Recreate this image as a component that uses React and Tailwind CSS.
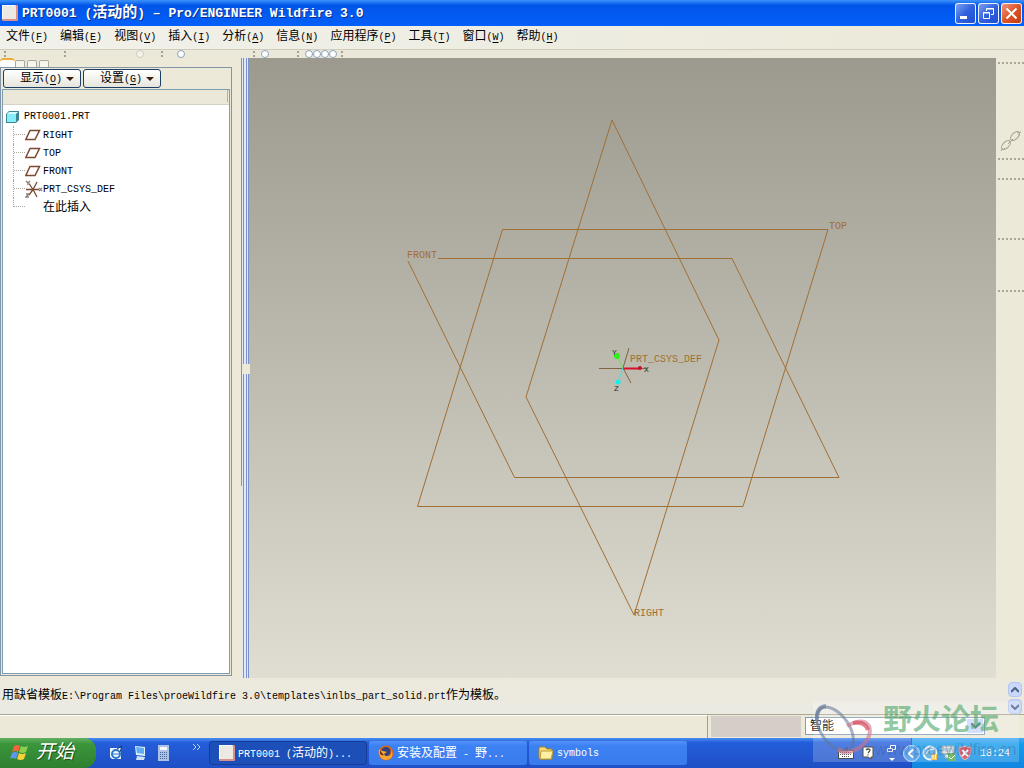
import React from 'react';

// CJK runs are drawn larger than the latin ones, two latin cells per glyph
const Mixed = ({ text, cjk = 'text-[12px]' }) => (
  <>
    {text.split(/([\u3000-\u9fff]+)/).filter(Boolean).map((part, i) => (
      <span key={i} className={/[\u3000-\u9fff]/.test(part) ? cjk : ''}>{part}</span>
    ))}
  </>
);

const Hot = ({ label, letter }) => (
  <span>
    <span className="text-[12px]">{label}</span>(<u className="underline-offset-2">{letter}</u>)
  </span>
);

const menus = [
  ['文件', 'F'], ['编辑', 'E'], ['视图', 'V'], ['插入', 'I'], ['分析', 'A'],
  ['信息', 'N'], ['应用程序', 'P'], ['工具', 'T'], ['窗口', 'W'], ['帮助', 'H'],
];

const PartIcon = ({ size = 16 }) => (
  <svg width={size} height={size} viewBox="0 0 16 16">
    <rect width="16" height="16" rx="1" fill="#d98f8a" />
    <path d="M0 0h14L13 1 1 14H0z" fill="#f8fbff" />
    <rect x="1" y="1" width="13" height="13" fill="#ece9e2" />
  </svg>
);

const WindowButton = ({ label, red, children }) => (
  <button
    aria-label={label}
    className={`w-[21px] h-[21px] rounded-[3px] border border-white/90 flex items-center justify-center bg-linear-to-br ${
      red ? 'from-[#ee9577] via-[#dc5428] to-[#c53b10]' : 'from-[#7c9ff3] via-[#3161dd] to-[#1f4fd3]'
    }`}
  >
    <svg width="19" height="19" viewBox="0 0 19 19" fill="none" stroke="#fff">{children}</svg>
  </button>
);

const TitleBar = () => (
  <header className="h-[26px] shrink-0 flex items-center pl-[2px] pr-[2px] bg-linear-to-b from-[#3c93fb] via-[#0155e8] via-20% to-[#0460fb]">
    <PartIcon />
    <h1 className="ml-1 pt-px flex-1 text-[13px] leading-[24px] font-bold text-white whitespace-pre [text-shadow:1px_1px_#0a2f8c]">
      <Mixed text="PRT0001 (活动的) – Pro/ENGINEER Wildfire 3.0" cjk="text-[15px]" />
    </h1>
    <div className="flex gap-[2px]">
      <WindowButton label="最小化"><path d="M4 13.5h7" strokeWidth="3" /></WindowButton>
      <WindowButton label="还原">
        <path d="M7.5 7V4.500h7v6H12M7 5h8" />
        <path d="M4.500 8.500h6v6h-6zM4 9h7" />
      </WindowButton>
      <WindowButton label="关闭" red><path d="M4.500 4.500l10 10M14.500 4.500l-10 10" strokeWidth="2" /></WindowButton>
    </div>
  </header>
);

const MenuBar = () => (
  <nav className="h-6 shrink-0 flex items-center gap-3 pl-[6px] bg-linear-to-r from-[#f1f1eb] via-[#eeede2] to-[#ece9d8] border-b border-[#d0cdbd]">
    {menus.map(([label, letter]) => (
      <button key={letter} className="leading-4 whitespace-nowrap"><Hot label={label} letter={letter} /></button>
    ))}
  </nav>
);

const Grip = () => (
  <span className="flex flex-col gap-[2px]">
    <i className="block w-[2px] h-[2px] bg-[#a5a293]" />
    <i className="block w-[2px] h-[2px] bg-[#a5a293]" />
  </span>
);

const Knob = ({ faint }) => (
  <span className={`block w-2 h-2 rounded-full border ${faint ? 'border-[#d0cdc0] bg-[#f4f2ea]' : 'border-[#8fa3bb] bg-white'}`} />
);

const ToolStrip = () => (
  <div className="h-2 shrink-0 flex items-center pl-1 bg-[#ebe8d9]">
    <div className="w-[60px]"><Grip /></div>
    <div className="w-[72px]"><Grip /></div>
    <div className="w-[25px]"><Knob faint /></div>
    <div className="w-4"><Grip /></div>
    <div className="w-[76px]"><Knob /></div>
    <div className="w-2"><Grip /></div>
    <div className="w-9"><Knob /></div>
    <div className="w-2"><Grip /></div>
    <div className="w-9 flex"><Knob /><Knob /><Knob /><Knob /></div>
    <Grip />
  </div>
);

const PlaneIcon = () => (
  <svg width="16" height="12" viewBox="0 0 16 12" fill="none" stroke="#7b4a30" strokeWidth="1.5">
    <path d="M5 1.500h9.500l-4.500 9H0.800z" />
  </svg>
);

const CsysIcon = () => (
  <svg width="18" height="18" viewBox="0 0 18 18" className="shrink-0" fill="none" stroke="#7b4a30" strokeWidth="1.300">
    <path d="M1 9.500h13M8 9.500L12 2M8 9.500L4 3.500M8 9.500L4 15M8 9.500L12 17" />
    <path d="M1 1l2 2 2-2M3 3v2M14 8l3 3M17 8l-3 3M1 14h3l-3 3h3" stroke="#8b8078" />
  </svg>
);

const CubeIcon = () => (
  <svg width="14" height="14" viewBox="0 0 14 14">
    <path d="M0 4l3-3h10v9l-3 3H0z" fill="#3e8792" />
    <path d="M1 4l2-2h9l-2 2z" fill="#d8fbff" />
    <rect x="1" y="4" width="9" height="8" fill="#86eef8" />
  </svg>
);

const tree = [
  ['RIGHT', <PlaneIcon />],
  ['TOP', <PlaneIcon />],
  ['FRONT', <PlaneIcon />],
  ['PRT_CSYS_DEF', <CsysIcon />],
  ['在此插入', null],
];

const DropButton = ({ label, letter }) => (
  <button className="h-[19px] w-[78px] shrink-0 flex items-center justify-end gap-1 pr-[6px] pt-px rounded-[3px] border border-[#1d3f66] bg-linear-to-b from-white to-[#e6e5dc] leading-4">
    <Hot label={label} letter={letter} />
    <svg width="8" height="4" viewBox="0 0 8 4"><path d="M0 0h8L4 4z" fill="#3a1d12" /></svg>
  </button>
);

const ModelTree = () => (
  <aside className="w-[232px] shrink-0 flex flex-col pb-[2px]">
    <div className="h-[9px] flex items-end">
      <button aria-label="模型树" className="w-[15px] h-[9px] bg-white border-t-2 border-[#eda93a] rounded-t-sm" />
      {['文件夹', '收藏夹', '连接'].map((t) => (
        <button key={t} aria-label={t} className="w-[10px] h-[7px] mr-[2px] bg-[#f6f5ee] border border-b-0 border-[#a7a99f] rounded-t-[2px]" />
      ))}
    </div>
    <div className="flex-1 flex flex-col border border-[#8195a5] pl-px pr-px pb-px">
      <div className="flex gap-[2px] pl-px pt-px pb-px">
        <DropButton label="显示" letter="O" />
        <DropButton label="设置" letter="G" />
      </div>
      <div className="flex-1 border border-[#7f9db0] bg-white">
        <div className="h-[15px] bg-[#ebe8d9] border-b border-[#d5d2c2] pr-px flex justify-end">
          <span className="w-px h-3 bg-[#a9b3b8]" />
        </div>
        <div className="pt-[3px] pl-[3px] leading-5">
          <div className="h-[18px] flex items-center gap-1"><CubeIcon /><span>PRT0001.PRT</span></div>
          <ul className="ml-[7px]">
            {tree.map(([name, icon], i) => (
              <li key={name} className="h-[18px] flex">
                <span className={`border-l border-dotted border-[#a9a9a0] ${i === tree.length - 1 ? 'h-[9px]' : 'h-[18px]'}`} />
                <span className="w-[11px] h-[9px] border-b border-dotted border-[#a9a9a0]" />
                <span className="w-[18px] flex items-center">{icon}</span>
                <span className="whitespace-nowrap"><Mixed text={name} /></span>
              </li>
            ))}
          </ul>
        </div>
      </div>
    </div>
  </aside>
);

const Splitter = () => (
  <div className="w-2 shrink-0 relative flex bg-[#e3e8f3]">
    <span className="w-px h-[69%] bg-[#7c90ca]" />
    <span className="w-px ml-px bg-[#7c90ca]" />
    <span className="w-px ml-[2px] bg-[#7c90ca]" />
    <span className="w-px ml-px bg-[#7c90ca]" />
    <span className="absolute left-px top-1/2 w-2 h-[10px] -mt-1 bg-[#ece9d8]" />
  </div>
);

const Viewport = () => (
  <main className="flex-1 min-w-0 bg-linear-to-b from-[#9c9a8e] to-[#e0ddd2]">
    <svg className="w-full h-full" viewBox="0 0 747 620" fill="none" stroke="#a06f35">
      <path d="M363 62L470 282L385 557L277 339z" />
      <path d="M253.500 171.500H579L494 448.500H168.500z" />
      <path d="M189 200.500H483L590 419.500H265.500L159 203" />
      <path d="M350 310.500H374M374 310L380 290M374 310L382 325M391 310.500H396" stroke="#80633f" />
      <path d="M374 310.500H391" stroke="#d8102c" strokeWidth="2" />
      <path d="M374 310L368 298" stroke="#5fe650" />
      <path d="M374 310L369 324" stroke="#3fe6e6" />
      <g stroke="none">
        <circle cx="391" cy="310" r="2" fill="#c8102c" />
        <circle cx="368" cy="298" r="3" fill="#2ff01c" />
        <circle cx="369" cy="324" r="2.500" fill="#10f0f0" />
        <g fill="#a06f35" className="text-[10px]">
          <text x="580" y="171">TOP</text>
          <text x="158" y="200">FRONT</text>
          <text x="385" y="558">RIGHT</text>
          <text x="381" y="304">PRT_CSYS_DEF</text>
        </g>
        <g fill="#2c2a26" className="text-[8px]">
          <text x="363" y="297">Y</text>
          <text x="395" y="314">X</text>
          <text x="365" y="333">Z</text>
        </g>
      </g>
    </svg>
  </main>
);

const Dots = () => <hr className="border-0 border-t-2 border-dotted border-[#aaa796]" />;

const SideTools = () => (
  <div className="w-7 shrink-0 pl-[2px] pt-1 bg-[#ece9d8]">
    <Dots />
    <div className="h-[94px] flex items-end justify-center pb-[6px]">
      <button aria-label="链接">
        <svg width="22" height="22" viewBox="0 0 22 22" fill="none" stroke="#a5a294">
          <ellipse cx="6" cy="15" rx="5.500" ry="3" transform="rotate(-45 6 15)" />
          <ellipse cx="15" cy="6" rx="5.500" ry="3" transform="rotate(-45 15 6)" />
          <path d="M8 14l5-5M1 21l2-3M4 20l1-2M17 3l4-1M18 5l2 0" />
        </svg>
      </button>
    </div>
    <Dots />
    <div className="h-[18px]" />
    <Dots />
    <div className="h-[58px]" />
    <Dots />
    <div className="h-[50px]" />
    <Dots />
  </div>
);

const Arrow = ({ up, label }) => (
  <button aria-label={label} className="w-[14px] h-[15px] rounded-sm border border-[#b3c5f0] bg-[#c8d7fa] flex items-center justify-center">
    <svg width="8" height="6" viewBox="0 0 8 6" fill="none" stroke="#4d6185" strokeWidth="2">
      <path d={up ? 'M0 5l4-4 4 4' : 'M0 1l4 4 4-4'} />
    </svg>
  </button>
);

const Messages = () => (
  <div className="h-9 shrink-0 flex pl-[2px] bg-linear-to-b from-[#ece9dc] to-[#ebeae2]">
    <p className="flex-1 pt-[9px] leading-[18px] whitespace-nowrap">
      <Mixed text="用缺省模板E:\Program Files\proeWildfire 3.0\templates\inlbs_part_solid.prt作为模板。" />
    </p>
    <div className="flex flex-col gap-[2px] pt-1 pr-[2px]">
      <Arrow up label="向上" />
      <Arrow label="向下" />
    </div>
  </div>
);

const StatusBar = () => (
  <div className="h-6 shrink-0 flex border-t border-[#a9a796] bg-[#ece9d8]">
    <div className="flex-1 border-t border-r border-t-white border-r-[#a09e90]" />
    <div className="w-[90px] ml-[3px] my-px bg-[#d5cdc7]" />
    <div className="w-[223px] pl-1 pt-[2px]">
      <div className="relative w-[180px] h-[18px] border border-[#7f9db9] bg-white">
        <select aria-label="过滤器" className="w-full h-4 pl-1 appearance-none text-[12px] leading-[18px] outline-none">
          <option>智能</option>
        </select>
        <span className="absolute right-px top-px w-4 h-[14px] bg-[#c8d7fa] flex items-center justify-center pointer-events-none">
          <svg width="9" height="6" viewBox="0 0 9 6" fill="none" stroke="#4d6185" strokeWidth="2"><path d="M0 0l4.500 4.500L9 0" /></svg>
        </span>
      </div>
    </div>
  </div>
);

const WinFlag = () => (
  <svg width="20" height="18" viewBox="0 0 20 18">
    <path d="M4 2q3-2 6 0L8 8Q5 6 2 8z" fill="#f0653a" />
    <path d="M11 2q3 2 7 0l-2 6q-3 2-7 0z" fill="#8bd04a" />
    <path d="M2 9q3-2 6 0l-2 6q-3-2-6 0z" fill="#5c96f0" />
    <path d="M9 9q3 2 7 0l-2 6q-3 2-7 0z" fill="#f8d038" />
  </svg>
);

const FirefoxIcon = () => (
  <svg width="16" height="16" viewBox="0 0 16 16">
    <circle cx="8" cy="8" r="7.500" fill="#d9641c" />
    <circle cx="8" cy="6.500" r="4.500" fill="#31427c" />
    <path d="M1 4q1 2 4 2l4 1-3 2q1 3 5 2 3-1 2-6 3 4 0 8-5 4-10 0Q0 9 1 4z" fill="#f6a634" />
    <path d="M2 5l2 3 2 2q-2 1-4-1z" fill="#7b2f16" />
  </svg>
);

const FolderIcon = () => (
  <svg width="16" height="14" viewBox="0 0 16 14">
    <path d="M1 2l1-1h5l2 2h5v10H2l-1-1z" fill="#f7dc76" stroke="#a98520" />
    <path d="M3 5h12l-2 8H2z" fill="#fdf0a4" stroke="#c29a30" />
  </svg>
);

const TaskButton = ({ icon, text, active }) => (
  <button
    className={`flex-1 max-w-[158px] h-6 flex items-center gap-[3px] pl-[9px] rounded-[3px] text-white whitespace-pre overflow-hidden ${
      active ? 'bg-[#1c4fb8] border border-[#153d97]' : 'bg-linear-to-b from-[#5594f8] via-[#3c81f3] via-20% to-[#3a7bec]'
    }`}
  >
    {icon}
    <span className="pt-px"><Mixed text={text} /></span>
  </button>
);

const QuickLaunch = () => (
  <div className="flex items-center w-[113px] pl-3 shrink-0">
    <button aria-label="Internet Explorer" className="w-6 shrink-0">
      <svg width="16" height="16" viewBox="0 0 16 16">
        <path d="M2 3h11v11H4l-2-2z" fill="#eef6ff" />
        <circle cx="8" cy="9" r="4" fill="none" stroke="#2f76c6" strokeWidth="2" />
        <path d="M4 9h8" stroke="#2f76c6" />
        <path d="M9 4l5-3-2 6" stroke="#173e70" fill="none" />
      </svg>
    </button>
    <button aria-label="显示桌面" className="w-6 shrink-0">
      <svg width="16" height="16" viewBox="0 0 16 16">
        <path d="M3 1l10 1v9L4 10z" fill="#dcf0ff" />
        <path d="M4 2l8 1v6l-7-1z" fill="#62acf0" />
        <path d="M5 11l8 1-1 3H4z" fill="#cfe2f3" />
      </svg>
    </button>
    <button aria-label="计算器" className="w-6 shrink-0">
      <svg width="16" height="16" viewBox="0 0 16 16">
        <rect x="2" y="0" width="11" height="16" fill="#aec3e4" />
        <rect x="4" y="2" width="7" height="3" fill="#f3f9ff" />
        <path d="M4 7.500h7M4 9.500h7M4 11.500h7M4 13.500h7" stroke="#45689f" strokeDasharray="1 1" />
      </svg>
    </button>
    <button aria-label="更多" className="ml-3 mb-3">
      <svg width="9" height="6" viewBox="0 0 9 6" fill="none" stroke="#c0d4ff"><path d="M1 0l3 3-3 3M5 0l3 3-3 3" /></svg>
    </button>
  </div>
);

const Tray = () => (
  <div className="w-[186px] shrink-0 flex h-full text-white">
    <div className="w-[73px] flex items-center gap-2">
      <svg width="16" height="12" viewBox="0 0 16 12" className="shrink-0">
        <rect x="0.500" y="3.500" width="15" height="8" fill="#fff" stroke="#222" />
        <path d="M2 5.500h12M2 7.500h12M4 9.500h8" stroke="#333" strokeDasharray="1 1" />
        <path d="M7 3q0-2 3-2" fill="none" stroke="#333" />
      </svg>
      <svg width="12" height="14" viewBox="0 0 12 14" className="shrink-0">
        <path d="M1 1h10v10H9v2l-3-2H1z" fill="#fffff0" stroke="#222" />
        <path d="M4 4q2-2 4 0 0 1-2 3M6 8.500v1" fill="none" stroke="#222" strokeWidth="1.300" />
      </svg>
      <svg width="12" height="18" viewBox="0 0 12 18" className="shrink-0 ml-1" fill="none" stroke="#fff">
        <path d="M4.500 4V1.500h5v4H7M1.500 4.500h5v3h-5z" />
        <path d="M3 14h6l-3 3z" fill="#fff" stroke="none" />
      </svg>
    </div>
    <div className="flex-1 flex items-center gap-[2px] bg-linear-to-b from-[#3fa8f5] via-[#159cec] via-20% to-[#1286df] border-l border-[#1352a8]">
      <button aria-label="隐藏图标" className="-ml-[9px] shrink-0">
        <svg width="17" height="17" viewBox="0 0 17 17">
          <circle cx="8.500" cy="8.500" r="8" fill="#3f95ee" stroke="#b8dcff" />
          <path d="M10 4.500l-4 4 4 4" fill="none" stroke="#fff" strokeWidth="2" />
        </svg>
      </button>
      <svg width="16" height="16" viewBox="0 0 16 16" className="shrink-0">
        <circle cx="8" cy="8" r="6.500" fill="#4ca3dc" stroke="#e8f5ff" strokeWidth="2" />
        <path d="M4 9l3-4 5-1" stroke="#e8f5ff" fill="none" />
        <path d="M9 9h6v6H9z" fill="#f4b52f" />
        <path d="M11 10v4M13.500 10v4" stroke="#fff" />
      </svg>
      <svg width="16" height="16" viewBox="0 0 16 16" className="shrink-0">
        <path d="M2 1h12v8H2zM5 9h6v4H5z" fill="#dbe5e6" stroke="#8099a0" />
        <path d="M4 4h8M5 6h6" stroke="#93a3a8" />
        <rect x="8" y="8" width="8" height="8" fill="#51a948" />
        <path d="M9 12l2 2 4-4" stroke="#fff" fill="none" />
      </svg>
      <svg width="14" height="16" viewBox="0 0 14 16" className="shrink-0">
        <path d="M7 1q3 2 6 1 1 9-6 13Q0 11 1 2q3 1 6-1z" fill="#d9394a" stroke="#e8b3ba" />
        <path d="M4 5l6 6M10 5l-6 6" stroke="#fff" strokeWidth="2" />
      </svg>
      <time className="ml-[6px]">18:24</time>
    </div>
  </div>
);

const Taskbar = () => (
  <footer className="h-[30px] shrink-0 flex items-center bg-linear-to-b from-[#4a8ef0] via-[#245edb] via-15% to-[#1f4fc4]">
    <button className="w-24 h-full shrink-0 flex items-center gap-[6px] pl-[10px] rounded-r-xl bg-linear-to-b from-[#63b162] via-[#3b963b] via-20% to-[#2f7f30] text-white">
      <WinFlag />
      <span className="text-[19px] leading-6 italic [text-shadow:1px_1px_#1d4f1d]">开始</span>
    </button>
    <QuickLaunch />
    <div className="flex-1 flex gap-[2px]">
      <TaskButton active icon={<PartIcon />} text="PRT0001 (活动的)..." />
      <TaskButton icon={<FirefoxIcon />} text="安装及配置 - 野..." />
      <TaskButton icon={<FolderIcon />} text="symbols" />
    </div>
    <Tray />
  </footer>
);

const Watermark = () => (
  <div className="absolute right-[5px] bottom-[6px] w-[206px] h-[60px] bg-white/20 pointer-events-none">
    <svg className="absolute left-0 top-0" width="64" height="56" viewBox="0 0 64 56" fill="none">
      <ellipse cx="22" cy="27" rx="14" ry="25" transform="rotate(-35 22 27)" stroke="#607596" strokeOpacity="0.550" strokeWidth="3" />
      <path d="M4 18Q3 5 13 4" stroke="#607596" strokeOpacity="0.600" strokeWidth="4" />
      <path d="M34 24q16-9 22 0 4 12-10 22-14 8-21 1" stroke="#cf7388" strokeOpacity="0.600" strokeWidth="4" />
      <path d="M40 21q12-2 15 7" stroke="#d84c5c" strokeOpacity="0.700" strokeWidth="4" />
    </svg>
    <span className="absolute left-[70px] top-[3px] text-[29px] leading-9 font-bold text-[#4aa568]/60 whitespace-nowrap">野火论坛</span>
    <span className="absolute left-[62px] top-[38px] font-['Liberation_Sans'] text-[16px] leading-5 text-[#36588f]/35 whitespace-nowrap">www.proewildfire.cn</span>
  </div>
);

const App = () => (
  <div className="relative h-screen flex flex-col overflow-hidden bg-[#ece9d8] text-black text-[10px] font-['Liberation_Mono','Noto_Sans_CJK_SC',monospace]">
    <TitleBar />
    <MenuBar />
    <ToolStrip />
    <div className="flex-1 min-h-0 flex">
      <ModelTree />
      <div className="w-[9px] shrink-0" />
      <Splitter />
      <Viewport />
      <SideTools />
    </div>
    <Messages />
    <StatusBar />
    <Taskbar />
    <Watermark />
  </div>
);

export default App;
